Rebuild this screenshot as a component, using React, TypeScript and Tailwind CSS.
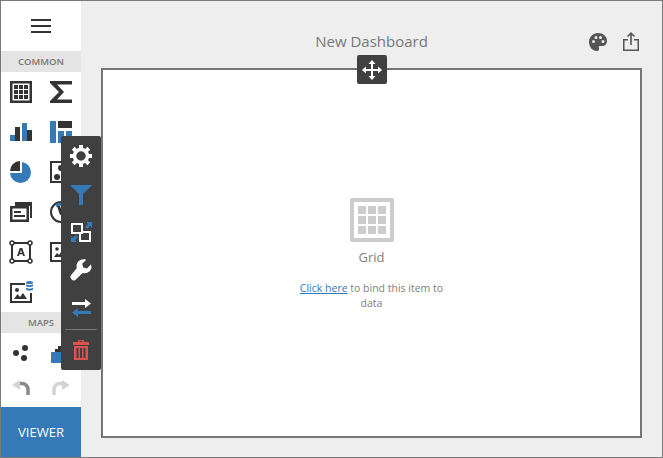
import React from 'react';

const DARK = '#333333';
const BLUE = '#337ab7';

const GridIcon = () => (
  <svg width="24" height="24" viewBox="0 0 24 24">
    <path fill={DARK} fillRule="evenodd" d="M1 1h22v22H1zM3.500 3.500v17h17v-17z" />
    <path fill={DARK} d="M5 5h4v4H5zM10 5h4v4h-4zM15 5h4v4h-4zM5 10h4v4H5zM10 10h4v4h-4zM15 10h4v4h-4zM5 15h4v4H5zM10 15h4v4h-4zM15 15h4v4h-4z" />
  </svg>
);

const SigmaIcon = () => (
  <svg width="24" height="24" viewBox="0 0 24 24">
    <path fill={DARK} d="M1 1h22v3.500H8l7 7.500-7 7.500h15V23H1v-2l9-9-9-9z" />
  </svg>
);

const BarsIcon = () => (
  <svg width="24" height="24" viewBox="0 0 24 24">
    <path fill={BLUE} d="M1 15h5v6H1zM13 3h5v18h-5z" />
    <path fill={DARK} d="M6 7h5v14H6zM18 10h5v11h-5z" />
  </svg>
);

const PivotIcon = () => (
  <svg width="24" height="24" viewBox="0 0 24 24">
    <path fill={BLUE} d="M1 1h6v22H1zM9 11h6v12H9zM17 11h6v12h-6z" />
    <path fill={DARK} d="M9 1h14v7H9z" />
  </svg>
);

const PieIcon = () => (
  <svg width="24" height="24" viewBox="0 0 24 24">
    <path fill={DARK} d="M11 1v10H1A10 10 0 0 1 11 1z" />
    <path fill={BLUE} d="M13 2a10.500 10.500 0 1 1-12 11h12z" />
  </svg>
);

const ScatterBoxIcon = () => (
  <svg width="24" height="24" viewBox="0 0 24 24">
    <path fill={DARK} fillRule="evenodd" d="M1 1h22v22H1zM3 3v18h18V3z" />
    <circle cx="12" cy="8" r="3" fill={DARK} />
    <circle cx="8" cy="17" r="3" fill={DARK} />
  </svg>
);

const CardsIcon = () => (
  <svg width="24" height="24" viewBox="0 0 24 24">
    <path fill={DARK} d="M6 2h17v16h-2V6H6z" />
    <path fill={DARK} fillRule="evenodd" d="M1 6h19v16H1zM3.500 8.500v11h14v-11z" />
    <path fill={DARK} d="M5 11h7v2H5zM5 15h11v2H5z" />
  </svg>
);

const GaugeIcon = () => (
  <svg width="24" height="24" viewBox="0 0 24 24">
    <circle cx="12" cy="12" r="10" fill="none" stroke={DARK} strokeWidth="2" />
    <path fill="none" stroke={BLUE} strokeWidth="3" d="M7 6a9 9 0 0 1 10 0" />
    <path fill={DARK} d="M8 6l3 0 3 8-3 1z" />
  </svg>
);

const TextBoxIcon = () => (
  <svg width="24" height="24" viewBox="0 0 24 24">
    <path fill="none" stroke={DARK} strokeWidth="2" d="M3 3h18v18H3z" />
    <g fill="#ffffff" stroke={DARK} strokeWidth="1.500">
      <circle cx="3" cy="3" r="2" />
      <circle cx="21" cy="3" r="2" />
      <circle cx="3" cy="21" r="2" />
      <circle cx="21" cy="21" r="2" />
    </g>
    <path fill={DARK} fillRule="evenodd" d="M10.800 8h2.400l2.800 8h-1.900l-.6-1.800h-3l-.6 1.800H8zM12 10l-1 2.800h2z" />
  </svg>
);

const ImageBoxIcon = () => (
  <svg width="24" height="24" viewBox="0 0 24 24">
    <path fill={DARK} fillRule="evenodd" d="M1 2h22v20H1zM3 4v16h18V4z" />
    <circle cx="8" cy="9" r="1.800" fill={DARK} />
    <path fill={DARK} d="M5 17l3-4 2 2 2-3 4 5z" />
  </svg>
);

const BoundImageIcon = () => (
  <svg width="24" height="24" viewBox="0 0 24 24">
    <path fill={DARK} fillRule="evenodd" d="M1 3h15v2H3v16h18v-8h2v10H1z" />
    <circle cx="8" cy="10" r="2" fill={DARK} />
    <path fill={DARK} d="M5 19l3.500-5 2.500 3 3-4 4 6z" />
    <g fill={BLUE}>
      <ellipse cx="20.500" cy="2.500" rx="3.500" ry="1.500" />
      <path d="M17 4c1 1.500 6 1.500 7 0v2c-1 1.500-6 1.500-7 0zM17 7.500c1 1.500 6 1.500 7 0v2c-1 1.500-6 1.500-7 0z" />
    </g>
  </svg>
);

const BubbleIcon = () => (
  <svg width="24" height="24" viewBox="0 0 24 24">
    <circle cx="7" cy="12" r="3" fill={DARK} />
    <circle cx="16" cy="7" r="3" fill={DARK} />
    <circle cx="15" cy="17" r="3" fill={DARK} />
  </svg>
);

const MapIcon = () => (
  <svg width="24" height="24" viewBox="0 0 24 24">
    <path fill={DARK} d="M6 11V8h3V5h3V2h11v9z" />
    <path fill={BLUE} d="M2 12a1 1 0 0 1 1-1h21v11H3a1 1 0 0 1-1-1z" />
  </svg>
);

const UndoIcon = () => (
  <svg width="18" height="15" viewBox="0 0 18 15">
    <path fill="none" stroke="#8a8a8a" strokeWidth="3.500" d="M6 3.500h4a6 6 0 0 1 6 6V15" />
    <path fill="#d4d4d4" d="M0 5l8-5v10z" />
  </svg>
);

const RedoIcon = () => (
  <svg width="18" height="15" viewBox="0 0 18 15">
    <path fill="none" stroke="#d4d4d4" strokeWidth="3.500" d="M12 3.500H8a6 6 0 0 0-6 6V15" />
    <path fill="#d4d4d4" d="M18 5l-8-5v10z" />
  </svg>
);

const GearIcon = () => (
  <svg width="24" height="24" viewBox="0 0 24 24">
    <circle cx="12" cy="12" r="6.500" fill="none" stroke="#ffffff" strokeWidth="3.500" />
    {[0, 45, 90, 135, 180, 225, 270, 315].map((deg) => (
      <rect key={deg} x="10" y="1" width="4" height="4" fill="#ffffff" transform={`rotate(${deg} 12 12)`} />
    ))}
  </svg>
);

const FilterIcon = () => (
  <svg width="24" height="24" viewBox="0 0 24 24">
    <path fill={BLUE} d="M1 3h22l-9 9v11h-4V12z" />
  </svg>
);

const ConvertIcon = () => (
  <svg width="24" height="24" viewBox="0 0 24 24">
    <path fill="none" stroke="#ffffff" strokeWidth="2" d="M3 4h10v9H3zM14 12h7v9H11v-7" />
    <path fill={BLUE} d="M17 2h6v6l-2-2-3 3-2-2 3-3zM8 22H2v-6l2 2 3-3 2 2-3 3z" />
  </svg>
);

const WrenchIcon = () => (
  <svg width="24" height="24" viewBox="0 0 24 24">
    <path fill="#ffffff" d="M22 6.500l-4 4-3.800-1-1-3.800 4-4c-2.800-.9-5.800-.3-7.700 1.600-1.800 1.800-2.400 4.400-1.700 6.900L2.500 16.500a3.300 3.300 0 0 0 4.700 4.700l6.300-6.300c2.500.7 5.200.1 7.100-1.700 1.900-1.900 2.300-3.900 1.400-6.700z" />
  </svg>
);

const SwapIcon = () => (
  <svg width="24" height="24" viewBox="0 0 24 24">
    <path fill="#ffffff" d="M3 6h13V3l6 4.500-6 4.500V9H3z" />
    <path fill={BLUE} d="M22 15H9v-3l-6 4.500L9 21v-3h13z" />
  </svg>
);

const TrashIcon = () => (
  <svg width="16" height="20" viewBox="0 0 16 20">
    <path fill="#d9534f" fillRule="evenodd" d="M5 0h6v2h5v3H0V2h5zM6.500 1v1h3V1zM1 6h14v14H1zM3.500 8v10h2V8zM7 8v10h2V8zM10.500 8v10h2V8z" />
  </svg>
);

const commonItems = [
  <GridIcon key="grid" />,
  <SigmaIcon key="sigma" />,
  <BarsIcon key="bars" />,
  <PivotIcon key="pivot" />,
  <PieIcon key="pie" />,
  <ScatterBoxIcon key="scatter" />,
  <CardsIcon key="cards" />,
  <GaugeIcon key="gauge" />,
  <TextBoxIcon key="text" />,
  <ImageBoxIcon key="image" />,
  <BoundImageIcon key="bound" />,
];

const SectionTitle = ({ label }: { label: string }) => (
  <div className="h-[21px] pt-[1px] flex items-center justify-center bg-[#e4e4e4] text-[9.500px] font-semibold text-[#777777]">
    {label}
  </div>
);

const App: React.FC = () => {
  return (
    <div
      className="relative w-[663px] h-[458px] flex bg-[#eeeeee] border border-[#7a7a7a] overflow-hidden"
      style={{ fontFamily: '"Open Sans", "Noto Sans", sans-serif' }}
    >
      {/* Toolbox */}
      <div className="w-[80px] flex flex-col bg-white">
        <div className="h-[50px] flex items-center justify-center">
          <div className="w-5 flex flex-col gap-[4px]">
            <div className="h-[2px] bg-[#333333]" />
            <div className="h-[2px] bg-[#333333]" />
            <div className="h-[2px] bg-[#333333]" />
          </div>
        </div>
        <SectionTitle label="COMMON" />
        <div className="grid grid-cols-2 auto-rows-[40px] h-[240px]">
          {commonItems.map((icon, i) => (
            <div key={i} className="flex items-center justify-center">
              {icon}
            </div>
          ))}
        </div>
        <SectionTitle label="MAPS" />
        <div className="grid grid-cols-2 auto-rows-[40px]">
          <div className="flex items-center justify-center"><BubbleIcon /></div>
          <div className="flex items-center justify-center"><MapIcon /></div>
        </div>
        <div className="grid grid-cols-2 h-[34px] pb-[6px] items-center">
          <div className="flex justify-center"><UndoIcon /></div>
          <div className="flex justify-center"><RedoIcon /></div>
        </div>
        <div className="flex-1 pt-[2px] flex items-center justify-center bg-[#337ab7] text-white text-[13px]">
          VIEWER
        </div>
      </div>

      {/* Design surface */}
      <div className="flex-1 flex flex-col pl-[20px] pr-[20px] pb-[19px]">
        <div className="h-[67px] shrink-0 relative flex items-start justify-center pt-[30px] text-[#777777] text-[15px] leading-[20px]">
          New Dashboard
          <div className="absolute right-[2px] top-[31px] flex items-center gap-[14px]">
            <svg width="20" height="20" viewBox="0 0 20 20">
              <path
                fill="#555555"
                fillRule="evenodd"
                d="M10 1c5 0 9 3.500 9 8 0 3-2 5-5 5h-2c-1 0-1.500.7-1.200 1.500.5 1 .5 3.500-1.800 3.500C4 19 1 14.500 1 10c0-5 4-9 9-9zM5.500 8a1.500 1.500 0 1 0 0 3 1.500 1.500 0 0 0 0-3zM8 4a1.500 1.500 0 1 0 0 3 1.500 1.500 0 0 0 0-3zM12.500 4a1.500 1.500 0 1 0 0 3 1.500 1.500 0 0 0 0-3zM15 8a1.500 1.500 0 1 0 0 3 1.500 1.500 0 0 0 0-3z"
              />
            </svg>
            <svg width="18" height="20" viewBox="0 0 18 20">
              <path fill="#555555" d="M9 0l4 4-1 1-2.200-2v10H8.200V3L6 5 5 4zM1 7h5v1.500H2.500v9h13v-9H12V7h5v12H1z" />
            </svg>
          </div>
        </div>

        <div className="relative flex-1 bg-white border-2 border-[#757575] flex flex-col items-center">
          {/* Move handle */}
          <div className="absolute left-1/2 -translate-x-1/2 -top-[15px] w-[30px] h-[29px] rounded-[2px] bg-[#404040] flex items-center justify-center">
            <svg width="20" height="20" viewBox="0 0 20 20">
              <path fill="#ffffff" d="M10 0l3.500 4h-2.500v5h5V6.500l4 3.500-4 3.500V11h-5v5h2.500L10 20l-3.500-4H9v-5H4v2.500L0 10l4-3.500V9h5V4H6.500z" />
            </svg>
          </div>

          <svg width="44" height="44" viewBox="0 0 44 44" className="mt-[128px]">
            <path fill="#cccccc" fillRule="evenodd" d="M2 0h40a2 2 0 0 1 2 2v40a2 2 0 0 1-2 2H2a2 2 0 0 1-2-2V2a2 2 0 0 1 2-2zM4 4v36h36V4z" />
            <path fill="#cccccc" d="M8 8h8v8H8zM18 8h8v8h-8zM28 8h8v8h-8zM8 18h8v8H8zM18 18h8v8h-8zM28 18h8v8h-8zM8 28h8v8H8zM18 28h8v8h-8zM28 28h8v8h-8z" />
          </svg>
          <div className="mt-[6px] text-[13px] leading-[18px] text-[#808080]">Grid</div>
          <div className="mt-[15px] w-[160px] text-center text-[10.500px] leading-[15px] text-[#808080]">
            <a className="text-[#337ab7] underline">Click here</a> to bind this item to data
          </div>
        </div>
      </div>

      {/* Item toolbar */}
      <div className="absolute left-[60px] top-[135px] w-[40px] h-[234px] bg-[#404040] rounded-[2px] flex flex-col items-center">
        <div className="h-[39px] flex items-center justify-center"><GearIcon /></div>
        <div className="h-[38px] flex items-center justify-center"><FilterIcon /></div>
        <div className="h-[38px] flex items-center justify-center"><ConvertIcon /></div>
        <div className="h-[38px] flex items-center justify-center"><WrenchIcon /></div>
        <div className="h-[38px] flex items-center justify-center"><SwapIcon /></div>
        <div className="w-[32px] h-px mt-[2px] bg-[#777777]" />
        <div className="flex-1 flex items-center justify-center"><TrashIcon /></div>
      </div>
    </div>
  );
};

export default App;
